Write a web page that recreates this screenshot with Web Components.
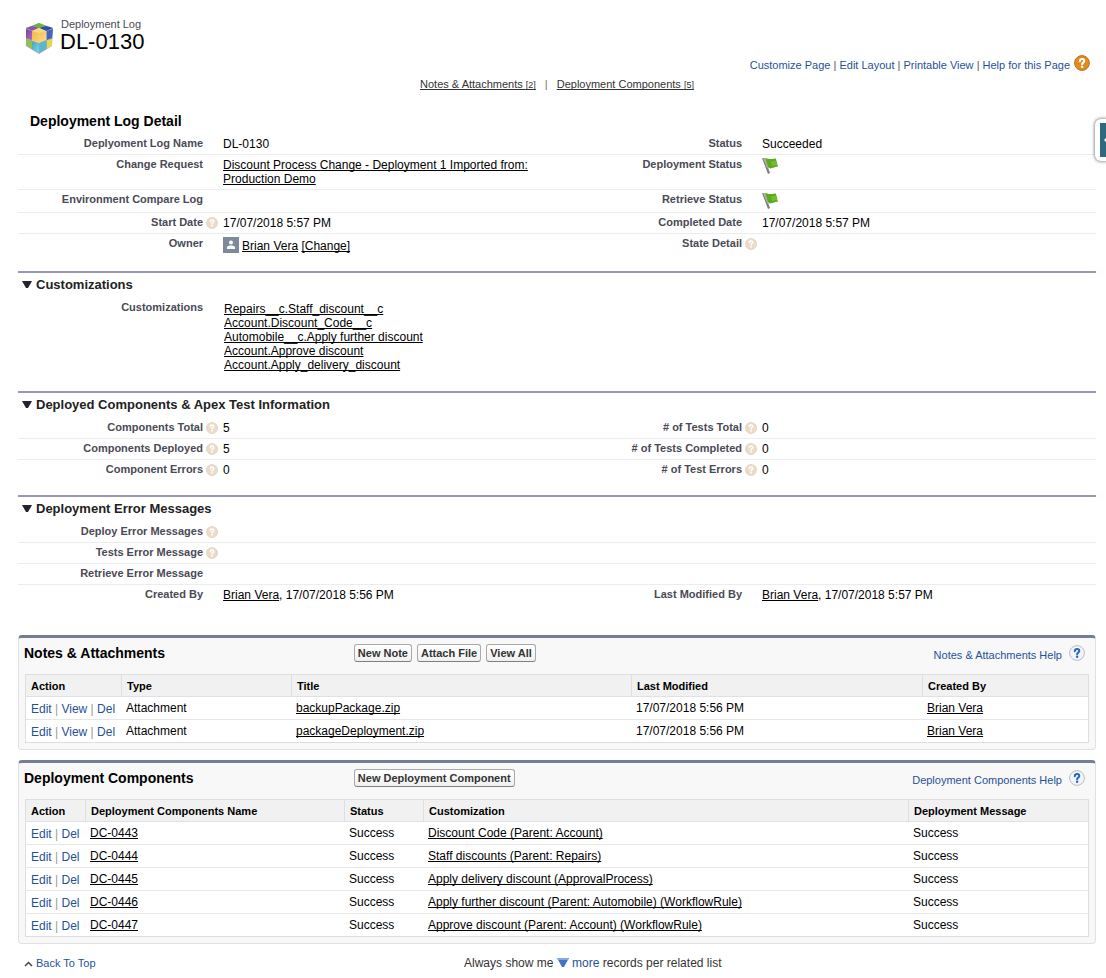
<!DOCTYPE html>
<html lang="en">
<head>
<meta charset="utf-8">
<title>Deployment Log: DL-0130</title>
<style>
  body {
    margin: 0;
    background: #fff;
    color: #000;
    font: 12px/14px "Liberation Sans", Arial, sans-serif;
    --link: #1f5297;
    --ink: #222;
    --label: #4a4a56;
  }
</style>
</head>
<body>
<deployment-page></deployment-page>

<script>
const define = (name, html, setup) => {
  const template = document.createElement('template');
  template.innerHTML = html;
  customElements.define(name, class extends HTMLElement {
    constructor() {
      super();
      this.attachShadow({ mode: 'open' }).append(template.content.cloneNode(true));
    }
    connectedCallback() {
      if (setup && !this.ready) { this.ready = true; setup(this, this.shadowRoot); }
    }
  });
};

/* Object logo: a cube of coloured tiles */
define('cube-logo', `
<style>:host{display:block;width:32px;height:32px} svg{display:block}</style>
<svg width="32" height="32" viewBox="0 0 32 32" aria-hidden="true">
  <defs>
    <linearGradient id="o" x1="0" y1="0" x2="1" y2="1"><stop offset="0" stop-color="#f6b23c"/><stop offset="1" stop-color="#fbdc8c"/></linearGradient>
    <linearGradient id="c" x1="0" y1="0" x2="1" y2="1"><stop offset="0" stop-color="#3aa6c4"/><stop offset="1" stop-color="#8ad3e2"/></linearGradient>
    <linearGradient id="p" x1="0" y1="0" x2="1" y2="1"><stop offset="0" stop-color="#7d3f9c"/><stop offset="1" stop-color="#b06cc0"/></linearGradient>
  </defs>
  <path d="M16 1 30 6 29 24 16 32 3 24 3 6Z" fill="#9aa9bd"/>
  <path d="M16 1 23 4 16 6 9 4Z" fill="#6db33f"/>
  <path d="M9 4 16 6 10 9 3 6Z" fill="#8a52ab"/>
  <path d="M23 4 30 6 23 9 16 6Z" fill="#2f4fae"/>
  <path d="M3 7 9 9 9 18 3 16Z" fill="url(#p)"/>
  <path d="M24 9 30 7 29 16 24 18Z" fill="#4a63b8"/>
  <path d="M3 17 9 19 9 27 4 24Z" fill="#8fc24a"/>
  <path d="M9 19 16 21 16 31 9 27Z" fill="url(#c)"/>
  <path d="M16 21 23 19 23 27 16 31Z" fill="#5bb7d0"/>
  <path d="M24 18 29 17 29 24 24 27Z" fill="#e3d94a"/>
  <path d="M9 9 16 6 23 9 23 18 16 21 9 19Z" fill="url(#o)"/>
  <path d="M9 9 16 6 23 9 16 11Z" fill="#fbd88a"/>
  <path d="M16 11 16 21" stroke="#f9cf74" stroke-width="1"/>
</svg>`);

/* Round question mark; kind = field | page | list */
define('help-dot', `
<style>
  :host{display:block;width:12px;height:12px}
  :host([kind=page]),:host([kind=list]){width:16px;height:16px}
  svg{display:block;width:100%;height:100%}
  .ring{fill:#eadcc9;stroke:#e2d2bd}
  .mark{fill:none;stroke:#fff;stroke-width:2;stroke-linecap:round}
  .dot{fill:#fff}
  :host([kind=page]) .ring{fill:#e38c1e;stroke:#b9701f}
  :host([kind=list]) .ring{fill:#f1f4f8;stroke:#b9bec6}
  :host([kind=list]) .mark{stroke:#2c68b8}
  :host([kind=list]) .dot{fill:#2c68b8}
</style>
<svg viewBox="0 0 16 16" aria-hidden="true">
  <circle class="ring" cx="8" cy="8" r="7.400"/>
  <path class="mark" d="M5.8 6.2C5.9 4.6 6.9 4 8.1 4S10.300 4.800 10.300 6C10.300 7.600 8.100 7.600 8.100 9.200"/>
  <circle class="dot" cx="8.100" cy="11.800" r="1.200"/>
</svg>`);

define('green-flag', `
<style>:host{display:block} svg{display:block}</style>
<svg width="18" height="16" viewBox="0 0 18 16" role="img" aria-label="Green flag">
  <path d="M0 0 2 0 8 15 6 16Z" fill="#7c7c7c"/>
  <path d="M1 0 3 0 7 11 5 10Z" fill="#a9b0a0"/>
  <path d="M3 0C6 1 8 1 10 1 12 1 13 0 14 1L16 9C13 8 12 10 10 10 8 11 7 10 6 9Z" fill="#5caa1e"/>
  <path d="M9 3C11 4 12 2 14 3L15 7C13 7 11 8 10 8Z" fill="#74bd2c"/>
</svg>`);

define('user-avatar', `
<style>:host{display:block} svg{display:block}</style>
<svg width="16" height="16" viewBox="0 0 16 16" aria-hidden="true">
  <rect width="16" height="16" fill="#7d8a9c"/>
  <circle cx="8" cy="5.500" r="2" fill="#fff"/>
  <path d="M4 12V10.500C4 9 6 8.500 8 8.500S12 9 12 10.500V12Z" fill="#fff"/>
</svg>`);

/* Underlined record link */
define('record-link', `
<style>
  :host{display:inline}
  a{color:inherit;text-decoration:underline;text-decoration-skip-ink:none}
</style><a href="#"><slot></slot></a>`);

define('page-header', `
<style>
  :host{display:block;padding:16px 6px 0 5px}
  .title{display:flex;align-items:center;gap:5px;height:38px}
  cube-logo{margin-top:6px}
  p{margin:0 1px;font-size:11px;line-height:14px;color:var(--label)}
  h1{margin:0;font-size:22px;line-height:22px;font-weight:400}
  .links{display:flex;justify-content:flex-end;align-items:center;gap:4px;height:16px;padding-top:3px;font-size:11px}
  .links a{color:var(--link);text-decoration:none}
  .links help-dot{margin-bottom:4px}
  .links nav{color:#555}
</style>
<div class="title">
  <cube-logo></cube-logo>
  <div><p>Deployment Log</p><h1>DL-0130</h1></div>
</div>
<div class="links">
  <nav><a href="#">Customize Page</a> | <a href="#">Edit Layout</a> | <a href="#">Printable View</a> | <a href="#">Help for this Page</a></nav>
  <help-dot kind="page"></help-dot>
</div>`);

define('jump-links', `
<style>
  :host{display:flex;justify-content:center;gap:9px;font-size:11px;padding-top:4px;color:#333}
  a{color:#333;text-decoration:underline;text-decoration-skip-ink:none}
  small{font-size:9px}
  i{font-style:normal;color:#777}
</style>
<a href="#">Notes &amp; Attachments <small>[2]</small></a><i>|</i>
<a href="#">Deployment Components <small>[5]</small></a>`);

/* Fields block; a heading with a rule and a twisty when "heading" is set */
define('detail-section', `
<style>
  :host{display:block;margin-top:14px}
  header{display:flex;align-items:center;gap:4px;height:23px;padding:0 4px 2px;border-top:2px solid #9797b4}
  button{display:flex;padding:0;border:0;background:none;width:10px}
  h3{margin:0;font-size:13px;line-height:16px;color:var(--ink)}
</style>
<header>
  <button type="button" aria-label="Collapse section"><svg width="10" height="7" viewBox="0 0 10 7"><path d="M0 0H10L6 7H4Z" fill="#222230"/></svg></button>
  <h3></h3>
</header>
<slot></slot>`, (host, root) => {
  root.querySelector('h3').textContent = host.getAttribute('heading');
});

/* One line of a section: one or two label / value pairs */
define('field-row', `
<style>
  :host{display:grid;grid-template-columns:calc(18% - 9px) 20px calc(32% - 11px) calc(18% - 9px) 20px 1fr;border-bottom:1px solid #ececec}
  :host([last]){border-bottom-color:transparent}
  .label{font-size:11px;font-weight:700;color:var(--label);text-align:right;padding:2px 0 4px}
  .hint{padding:4px 0 0 3px}
  .value{padding:3px 0;min-height:14px}
</style>
<div class="label" id="l1"></div><div class="hint"></div><div class="value" role="group" aria-labelledby="l1"><slot name="first"></slot></div>
<div class="label" id="l2"></div><div class="hint"></div><div class="value" role="group" aria-labelledby="l2"><slot name="second"></slot></div>`,
(host, root) => {
  const hints = root.querySelectorAll('.hint');
  ['first', 'second'].forEach((key, i) => {
    root.getElementById('l' + (i + 1)).textContent = host.getAttribute(key) || '';
    if (host.hasAttribute(key + '-help')) hints[i].append(document.createElement('help-dot'));
  });
});

define('log-detail', `
<style>
  :host{display:block}
  h2{margin:0;padding:21px 12px 5px;font-size:14px;line-height:16px}
  .owner{display:flex;gap:3px;align-items:center}
  .owner span{padding-top:1px}
  .list{padding:1px}
  .list record-link{display:block}
</style>
<h2>Deployment Log Detail</h2>
<field-row first="Deplyoment Log Name" second="Status"><span slot="first">DL-0130</span><span slot="second">Succeeded</span></field-row>
<field-row first="Change Request" second="Deployment Status"><record-link slot="first">Discount Process Change - Deployment 1 Imported from: Production Demo</record-link><green-flag slot="second"></green-flag></field-row>
<field-row first="Environment Compare Log" second="Retrieve Status"><green-flag slot="second"></green-flag></field-row>
<field-row first="Start Date" first-help second="Completed Date"><span slot="first">17/07/2018 5:57 PM</span><span slot="second">17/07/2018 5:57 PM</span></field-row>
<field-row last first="Owner" second="State Detail" second-help><div class="owner" slot="first"><user-avatar></user-avatar><span><record-link>Brian Vera</record-link> <record-link>[Change]</record-link></span></div></field-row>
<detail-section heading="Customizations">
  <field-row last first="Customizations"><div class="list" slot="first">
    <record-link>Repairs__c.Staff_discount__c</record-link>
    <record-link>Account.Discount_Code__c</record-link>
    <record-link>Automobile__c.Apply further discount</record-link>
    <record-link>Account.Approve discount</record-link>
    <record-link>Account.Apply_delivery_discount</record-link>
  </div></field-row>
</detail-section>
<detail-section heading="Deployed Components &amp; Apex Test Information">
  <field-row first="Components Total" first-help second="# of Tests Total" second-help><span slot="first">5</span><span slot="second">0</span></field-row>
  <field-row first="Components Deployed" first-help second="# of Tests Completed" second-help><span slot="first">5</span><span slot="second">0</span></field-row>
  <field-row last first="Component Errors" first-help second="# of Test Errors" second-help><span slot="first">0</span><span slot="second">0</span></field-row>
</detail-section>
<detail-section heading="Deployment Error Messages">
  <field-row first="Deploy Error Messages" first-help></field-row>
  <field-row first="Tests Error Message" first-help></field-row>
  <field-row first="Retrieve Error Message"></field-row>
  <field-row last first="Created By" second="Last Modified By"><span slot="first"><record-link>Brian Vera</record-link>, 17/07/2018 5:56 PM</span><span slot="second"><record-link>Brian Vera</record-link>, 17/07/2018 5:57 PM</span></field-row>
</detail-section>`);

/* Toolbar button */
define('tool-button', `
<style>
  :host{display:block}
  button{display:block;height:18px;padding:0 3px;border:1px solid #a9a9ad;border-bottom-color:#7f7f7f;border-radius:3px;
    background:linear-gradient(#fff,#f0f0f0);color:#333;font:700 11px/14px "Liberation Sans",Arial,sans-serif;white-space:nowrap}
</style><button type="button"><slot></slot></button>`);

define('related-list', `
<style>
  :host{display:block;margin-top:10px;border:1px solid #dfe1e4;border-top:3px solid #747e96;border-radius:4px;background:#f8f8f8;padding:0 6px 6px}
  header{display:grid;grid-template-columns:31% 1fr auto;align-items:center;height:36px}
  h2{margin:0 0 7px -1px;font-size:14px;line-height:16px}
  .tools{display:flex;gap:5px;padding-bottom:6px;margin-left:-1px}
  .help{display:flex;align-items:center;gap:7px;padding:0 4px 4px 0;font-size:11px}
  .help a{color:var(--link);text-decoration:none;padding-top:2px}
  .help help-dot{margin-bottom:3px}
  .body{padding-right:1px}
</style>
<header>
  <h2></h2>
  <div class="tools"><slot name="tools"></slot></div>
  <div class="help"><a href="#"></a><help-dot kind="list"></help-dot></div>
</header>
<div class="body"><slot></slot></div>`, (host, root) => {
  const title = host.getAttribute('heading');
  root.querySelector('h2').textContent = title;
  root.querySelector('a').textContent = title + ' Help';
});

const tables = {
  notes: {
    actions: ['Edit', 'View', 'Del'],
    columns: [['Action', 95], ['Type', 170], ['Title', 340, true], ['Last Modified', 291], ['Created By', 166, true]],
    rows: [
      ['Attachment', 'backupPackage.zip', '17/07/2018 5:56 PM', 'Brian Vera'],
      ['Attachment', 'packageDeployment.zip', '17/07/2018 5:56 PM', 'Brian Vera'],
    ],
  },
  components: {
    actions: ['Edit', 'Del'],
    columns: [['Action', 59], ['Deployment Components Name', 259, true], ['Status', 79], ['Customization', 485, true], ['Deployment Message', 180]],
    rows: [
      ['DC-0443', 'Success', 'Discount Code (Parent: Account)', 'Success'],
      ['DC-0444', 'Success', 'Staff discounts (Parent: Repairs)', 'Success'],
      ['DC-0445', 'Success', 'Apply delivery discount (ApprovalProcess)', 'Success'],
      ['DC-0446', 'Success', 'Apply further discount (Parent: Automobile) (WorkflowRule)', 'Success'],
      ['DC-0447', 'Success', 'Approve discount (Parent: Account) (WorkflowRule)', 'Success'],
    ],
  },
};

define('record-table', `
<style>
  :host{display:block}
  table{box-sizing:border-box;width:100%;table-layout:fixed;border-collapse:separate;border-spacing:0;border:1px solid #dedede;border-bottom:0;background:#fff;font:inherit}
  th,td{box-sizing:border-box}
  th{height:22px;padding:0 5px;border-bottom:1px solid #dfe2e4;background:#f1f1f1;font-size:11px;text-align:left;white-space:nowrap}
  th+th{border-left:1px solid #dedfe1}
  td{height:23px;padding:4px 5px 3px;border-bottom:1px solid #e6e6e6;vertical-align:top;white-space:nowrap}
  tr:last-child td{border-bottom-color:#dedede}
  td.act{padding:5px 0 3px 5px;color:#999}
  .act a{color:var(--link);text-decoration:none}
</style>
<table><colgroup></colgroup><thead><tr></tr></thead><tbody></tbody></table>`, (host, root) => {
  const { actions, columns, rows } = tables[host.getAttribute('source')];
  root.querySelector('colgroup').innerHTML = columns.map(c => `<col style="width:${c[1]}px">`).join('');
  root.querySelector('thead tr').innerHTML = columns.map(c => `<th scope="col">${c[0]}</th>`).join('');
  const act = `<td class="act">${actions.map(a => `<a href="#">${a}</a>`).join(' | ')}</td>`;
  root.querySelector('tbody').innerHTML = rows.map(r => `<tr>${act}${r.map((v, i) =>
    `<td>${columns[i + 1][2] ? `<record-link>${v}</record-link>` : v}</td>`).join('')}</tr>`).join('');
});

define('page-footer', `
<style>
  :host{display:flex;align-items:center;padding:12px 6px 14px;color:#333}
  a{color:var(--link);text-decoration:none}
  .top{font-size:11px}
  .top svg{margin-right:3px}
  .more{flex:1;text-align:center}
</style>
<div class="top"><svg width="9" height="6" viewBox="0 0 9 6" aria-hidden="true"><path d="M1 5 4.500 1.500 8 5" fill="none" stroke="#444" stroke-width="1.500"/></svg><a href="#">Back To Top</a></div>
<div class="more">Always show me <a href="#"><svg width="12" height="9" viewBox="0 0 12 9" aria-hidden="true"><path d="M0 0H12L7 9H5Z" fill="#4273c8"/><path d="M0 0H12L11 2H1Z" fill="#86a8e4"/></svg> more</a> records per related list</div>`);

/* Pull-out tab on the window's right edge */
define('side-tab', `
<style>
  :host{position:absolute;right:0;top:119px}
  button{display:flex;align-items:center;width:11px;height:42px;padding:4px 0 4px 5px;border:0;border-radius:6px 0 0 6px;background:#fff;box-shadow:0 0 3px 1px #999}
  svg{display:block}
</style>
<button type="button" aria-label="Open sidebar"><svg width="6" height="34" viewBox="0 0 6 34"><path d="M0 0H6V34H0Z" fill="#2d6a80"/><path d="M6 15V19L4 17Z" fill="#fff"/></svg></button>`);

define('deployment-page', `
<style>
  :host{display:block;position:relative;overflow:hidden}
  main{padding:0 10px 0 18px}
  .lists{padding-top:19px}
</style>
<main>
  <page-header></page-header>
  <jump-links></jump-links>
  <log-detail></log-detail>
  <div class="lists">
    <related-list heading="Notes &amp; Attachments">
      <tool-button slot="tools">New Note</tool-button>
      <tool-button slot="tools">Attach File</tool-button>
      <tool-button slot="tools">View All</tool-button>
      <record-table source="notes"></record-table>
    </related-list>
    <related-list heading="Deployment Components">
      <tool-button slot="tools">New Deployment Component</tool-button>
      <record-table source="components"></record-table>
    </related-list>
  </div>
  <page-footer></page-footer>
</main>
<side-tab></side-tab>`);
</script>
</body>
</html>
